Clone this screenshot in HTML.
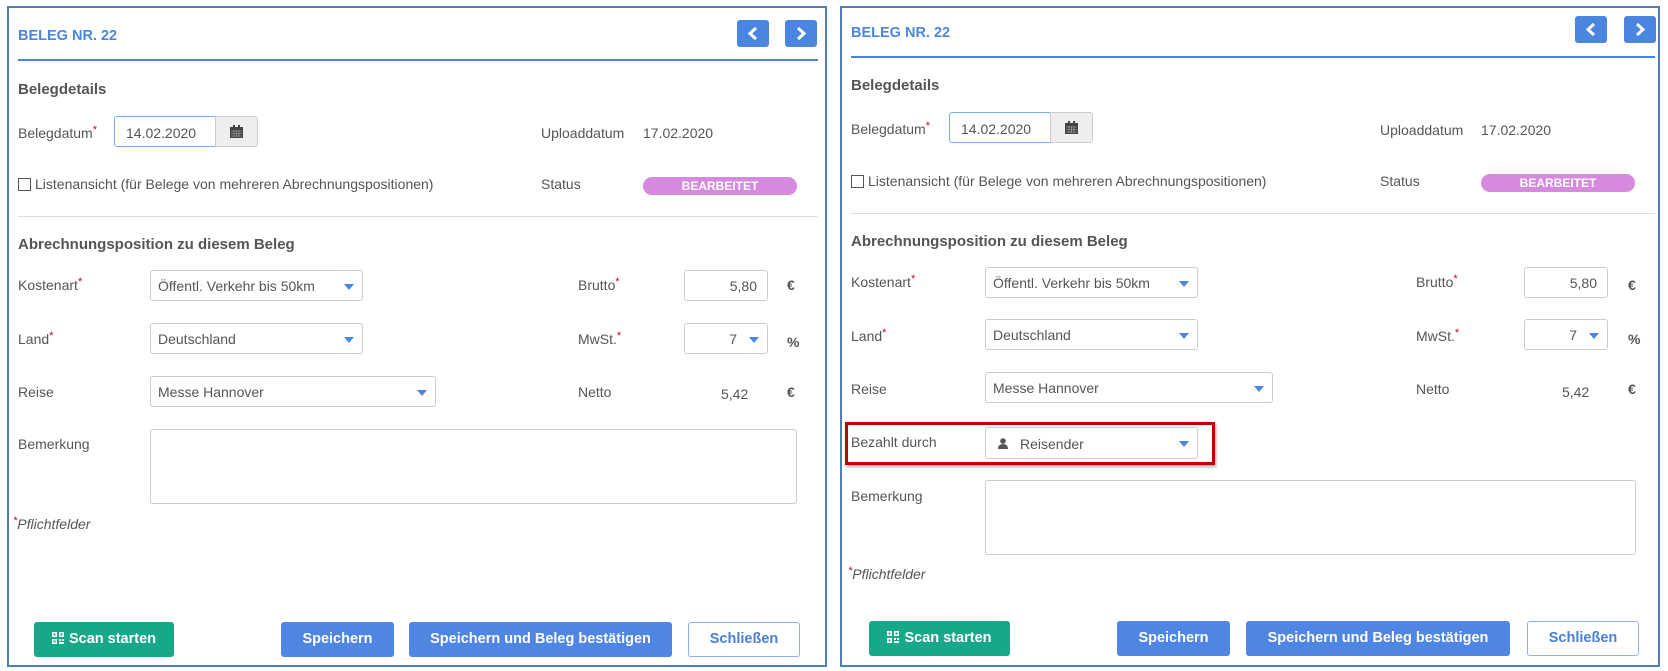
<!DOCTYPE html>
<html><head><meta charset="utf-8"><style>
*{box-sizing:border-box;margin:0;padding:0}
body{width:1668px;height:671px;background:#fff;position:relative;overflow:hidden;font-family:"Liberation Sans",sans-serif;font-size:14px;color:#555}
.p{position:absolute;border:2px solid #4f7db8;background:#fff}
.a{position:absolute;white-space:nowrap}
.t{color:#4a86e0;font-weight:bold;font-size:14.5px}
.h{font-weight:bold;font-size:15px;color:#555}
.req{color:#d0021b;font-size:11px;vertical-align:top;position:relative;top:-1px}
.inp{position:absolute;border:1px solid #ccc;border-radius:3px;background:#fff}
.sel::after{content:"";position:absolute;right:8px;top:50%;margin-top:-2px;border-left:5px solid transparent;border-right:5px solid transparent;border-top:6px solid #4a86e0}
.nav{position:absolute;width:32px;height:27px;background:#4a86e0;border-radius:3px}
.nav svg{position:absolute;left:9px;top:6px}
.btn{position:absolute;border-radius:3px;color:#fff;font-weight:bold;font-size:14.5px;text-align:center;background:#4f86e3}
.line{position:absolute;height:2px;background:#4a86e0}
.div{position:absolute;height:1px;background:#ddd}
.badge{position:absolute;background:#d58ade;border-radius:10px;color:#fff;font-weight:bold;font-size:12px;text-align:center;line-height:18px}
</style></head><body>

<!-- LEFT PANEL -->
<div class="p" style="left:7px;top:6px;width:820px;height:661px">
 <div class="a t" style="left:9px;top:20px">BELEG NR. 22</div>
 <div class="nav" style="left:728px;top:12px"><svg width="14" height="15" viewBox="0 0 14 15"><path d="M10 2 L4 7.5 L10 13" stroke="#fff" stroke-width="3" fill="none"/></svg></div>
 <div class="nav" style="left:776px;top:12px"><svg width="14" height="15" viewBox="0 0 14 15"><path d="M4 2 L10 7.5 L4 13" stroke="#fff" stroke-width="3" fill="none"/></svg></div>
 <div class="line" style="left:9px;top:51px;width:800px"></div>
 <div class="a h" style="left:9px;top:73px">Belegdetails</div>
 <div class="a" style="left:9px;top:117px">Belegdatum<span class="req">*</span></div>
 <div class="inp" style="left:105px;top:108px;width:102px;height:31px;border-color:#7aaee8;border-radius:3px 0 0 3px;padding:8px 0 0 11px">14.02.2020</div>
 <div class="inp" style="left:206px;top:108px;width:43px;height:31px;background:#eee;border-radius:0 3px 3px 0"><svg style="position:absolute;left:14px;top:8px" width="13" height="13" viewBox="0 0 13 13"><rect x="0" y="2" width="13" height="11" fill="#444"/><rect x="3" y="0" width="2" height="3" fill="#444"/><rect x="8" y="0" width="2" height="3" fill="#444"/><path d="M1 6h11M1 8.5h11M1 11h11M4 5v7M6.5 5v7M9 5v7" stroke="#aaa" stroke-width=".6"/></svg></div>
 <div class="a" style="left:532px;top:117px">Uploaddatum</div>
 <div class="a" style="left:634px;top:117px">17.02.2020</div>
 <div class="a" style="left:9px;top:168px"><span style="display:inline-block;width:13px;height:13px;border:1px solid #555;vertical-align:-2px;margin-right:4px"></span>Listenansicht (für Belege von mehreren Abrechnungspositionen)</div>
 <div class="a" style="left:532px;top:168px">Status</div>
 <div class="badge" style="left:634px;top:169px;width:154px">BEARBEITET</div>
 <div class="div" style="left:9px;top:208px;width:800px"></div>
 <div class="a h" style="left:9px;top:228px">Abrechnungsposition zu diesem Beleg</div>
 <div class="a" style="left:9px;top:269px">Kostenart<span class="req">*</span></div>
 <div class="inp sel" style="left:141px;top:262px;width:213px;height:31px;padding:7px 0 0 7px">Öffentl. Verkehr bis 50km</div>
 <div class="a" style="left:569px;top:269px">Brutto<span class="req">*</span></div>
 <div class="inp" style="left:675px;top:262px;width:84px;height:31px;padding:7px 10px 0 0;text-align:right">5,80</div>
 <div class="a" style="left:778px;top:269px;font-weight:bold">€</div>
 <div class="a" style="left:9px;top:323px">Land<span class="req">*</span></div>
 <div class="inp sel" style="left:141px;top:315px;width:213px;height:31px;padding:7px 0 0 7px">Deutschland</div>
 <div class="a" style="left:569px;top:323px">MwSt.<span class="req">*</span></div>
 <div class="inp sel" style="left:675px;top:315px;width:84px;height:31px;padding:7px 30px 0 0;text-align:right">7</div>
 <div class="a" style="left:778px;top:326px;font-weight:bold">%</div>
 <div class="a" style="left:9px;top:376px">Reise</div>
 <div class="inp sel" style="left:141px;top:368px;width:286px;height:31px;padding:7px 0 0 7px">Messe Hannover</div>
 <div class="a" style="left:569px;top:376px">Netto</div>
 <div class="a" style="left:712px;top:378px">5,42</div>
 <div class="a" style="left:778px;top:376px;font-weight:bold">€</div>
 <div class="a" style="left:9px;top:428px">Bemerkung</div>
 <div class="inp" style="left:141px;top:421px;width:647px;height:75px"></div>
 <div class="a" style="left:4px;top:508px;font-style:italic"><span class="req">*</span>Pflichtfelder</div>
 <div class="btn" style="left:25px;top:614px;width:140px;height:35px;line-height:35px;background:#17a88a"><svg width="12" height="12" viewBox="0 0 12 12" style="vertical-align:-1px;margin-right:5px"><path d="M0 0h5v5H0zM7 0h5v5H7zM0 7h5v5H0zM7 7h2v2H7zM10 7h2v2h-2zM7 10h5v2H7z" fill="#fff"/><path d="M1.5 1.5h2v2h-2zM8.5 1.5h2v2h-2zM1.5 8.5h2v2h-2z" fill="#17a88a"/></svg>Scan starten</div>
 <div class="btn" style="left:272px;top:614px;width:113px;height:35px;line-height:35px">Speichern</div>
 <div class="btn" style="left:400px;top:614px;width:263px;height:35px;line-height:35px">Speichern und Beleg bestätigen</div>
 <div class="btn" style="left:679px;top:614px;width:112px;height:35px;line-height:33px;background:#fff;border:1px solid #8fb3e8;color:#4a7fd6">Schließen</div>
</div>

<!-- RIGHT PANEL -->
<div class="p" style="left:840px;top:6px;width:820px;height:661px">
 <div class="a t" style="left:9px;top:17px">BELEG NR. 22</div>
 <div class="nav" style="left:733px;top:8px"><svg width="14" height="15" viewBox="0 0 14 15"><path d="M10 2 L4 7.5 L10 13" stroke="#fff" stroke-width="3" fill="none"/></svg></div>
 <div class="nav" style="left:782px;top:8px"><svg width="14" height="15" viewBox="0 0 14 15"><path d="M4 2 L10 7.5 L4 13" stroke="#fff" stroke-width="3" fill="none"/></svg></div>
 <div class="line" style="left:9px;top:48px;width:804px"></div>
 <div class="a h" style="left:9px;top:69px">Belegdetails</div>
 <div class="a" style="left:9px;top:113px">Belegdatum<span class="req">*</span></div>
 <div class="inp" style="left:107px;top:104px;width:102px;height:31px;border-color:#7aaee8;border-radius:3px 0 0 3px;padding:8px 0 0 11px">14.02.2020</div>
 <div class="inp" style="left:208px;top:104px;width:43px;height:31px;background:#eee;border-radius:0 3px 3px 0"><svg style="position:absolute;left:14px;top:8px" width="13" height="13" viewBox="0 0 13 13"><rect x="0" y="2" width="13" height="11" fill="#444"/><rect x="3" y="0" width="2" height="3" fill="#444"/><rect x="8" y="0" width="2" height="3" fill="#444"/><path d="M1 6h11M1 8.5h11M1 11h11M4 5v7M6.5 5v7M9 5v7" stroke="#aaa" stroke-width=".6"/></svg></div>
 <div class="a" style="left:538px;top:114px">Uploaddatum</div>
 <div class="a" style="left:639px;top:114px">17.02.2020</div>
 <div class="a" style="left:9px;top:165px"><span style="display:inline-block;width:13px;height:13px;border:1px solid #555;vertical-align:-2px;margin-right:4px"></span>Listenansicht (für Belege von mehreren Abrechnungspositionen)</div>
 <div class="a" style="left:538px;top:165px">Status</div>
 <div class="badge" style="left:639px;top:166px;width:154px">BEARBEITET</div>
 <div class="div" style="left:9px;top:205px;width:804px"></div>
 <div class="a h" style="left:9px;top:225px">Abrechnungsposition zu diesem Beleg</div>
 <div class="a" style="left:9px;top:266px">Kostenart<span class="req">*</span></div>
 <div class="inp sel" style="left:143px;top:259px;width:213px;height:31px;padding:7px 0 0 7px">Öffentl. Verkehr bis 50km</div>
 <div class="a" style="left:574px;top:266px">Brutto<span class="req">*</span></div>
 <div class="inp" style="left:682px;top:259px;width:84px;height:31px;padding:7px 10px 0 0;text-align:right">5,80</div>
 <div class="a" style="left:786px;top:269px;font-weight:bold">€</div>
 <div class="a" style="left:9px;top:320px">Land<span class="req">*</span></div>
 <div class="inp sel" style="left:143px;top:311px;width:213px;height:31px;padding:7px 0 0 7px">Deutschland</div>
 <div class="a" style="left:574px;top:320px">MwSt.<span class="req">*</span></div>
 <div class="inp sel" style="left:682px;top:311px;width:84px;height:31px;padding:7px 30px 0 0;text-align:right">7</div>
 <div class="a" style="left:786px;top:323px;font-weight:bold">%</div>
 <div class="a" style="left:9px;top:373px">Reise</div>
 <div class="inp sel" style="left:143px;top:364px;width:288px;height:31px;padding:7px 0 0 7px">Messe Hannover</div>
 <div class="a" style="left:574px;top:373px">Netto</div>
 <div class="a" style="left:720px;top:376px">5,42</div>
 <div class="a" style="left:786px;top:373px;font-weight:bold">€</div>
 <div style="position:absolute;left:3px;top:414px;width:370px;height:43px;border:3px solid #c00000;box-shadow:1px 2px 3px rgba(0,0,0,.35)"></div>
 <div class="a" style="left:9px;top:426px">Bezahlt durch</div>
 <div class="inp sel" style="left:143px;top:419px;width:213px;height:32px;padding:8px 0 0 34px">Reisender<svg style="position:absolute;left:12px;top:10px" width="10" height="11" viewBox="0 0 10 11"><circle cx="5" cy="3" r="2.8" fill="#555"/><path d="M0 11 Q0 6 5 6 Q10 6 10 11Z" fill="#555"/></svg></div>
 <div class="a" style="left:9px;top:480px">Bemerkung</div>
 <div class="inp" style="left:143px;top:472px;width:651px;height:75px"></div>
 <div class="a" style="left:6px;top:558px;font-style:italic"><span class="req">*</span>Pflichtfelder</div>
 <div class="btn" style="left:27px;top:613px;width:141px;height:35px;line-height:35px;background:#17a88a"><svg width="12" height="12" viewBox="0 0 12 12" style="vertical-align:-1px;margin-right:5px"><path d="M0 0h5v5H0zM7 0h5v5H7zM0 7h5v5H0zM7 7h2v2H7zM10 7h2v2h-2zM7 10h5v2H7z" fill="#fff"/><path d="M1.5 1.5h2v2h-2zM8.5 1.5h2v2h-2zM1.5 8.5h2v2h-2z" fill="#17a88a"/></svg>Scan starten</div>
 <div class="btn" style="left:275px;top:613px;width:113px;height:35px;line-height:35px">Speichern</div>
 <div class="btn" style="left:404px;top:613px;width:264px;height:35px;line-height:35px">Speichern und Beleg bestätigen</div>
 <div class="btn" style="left:685px;top:613px;width:112px;height:35px;line-height:33px;background:#fff;border:1px solid #8fb3e8;color:#4a7fd6">Schließen</div>
</div>
</body></html>
